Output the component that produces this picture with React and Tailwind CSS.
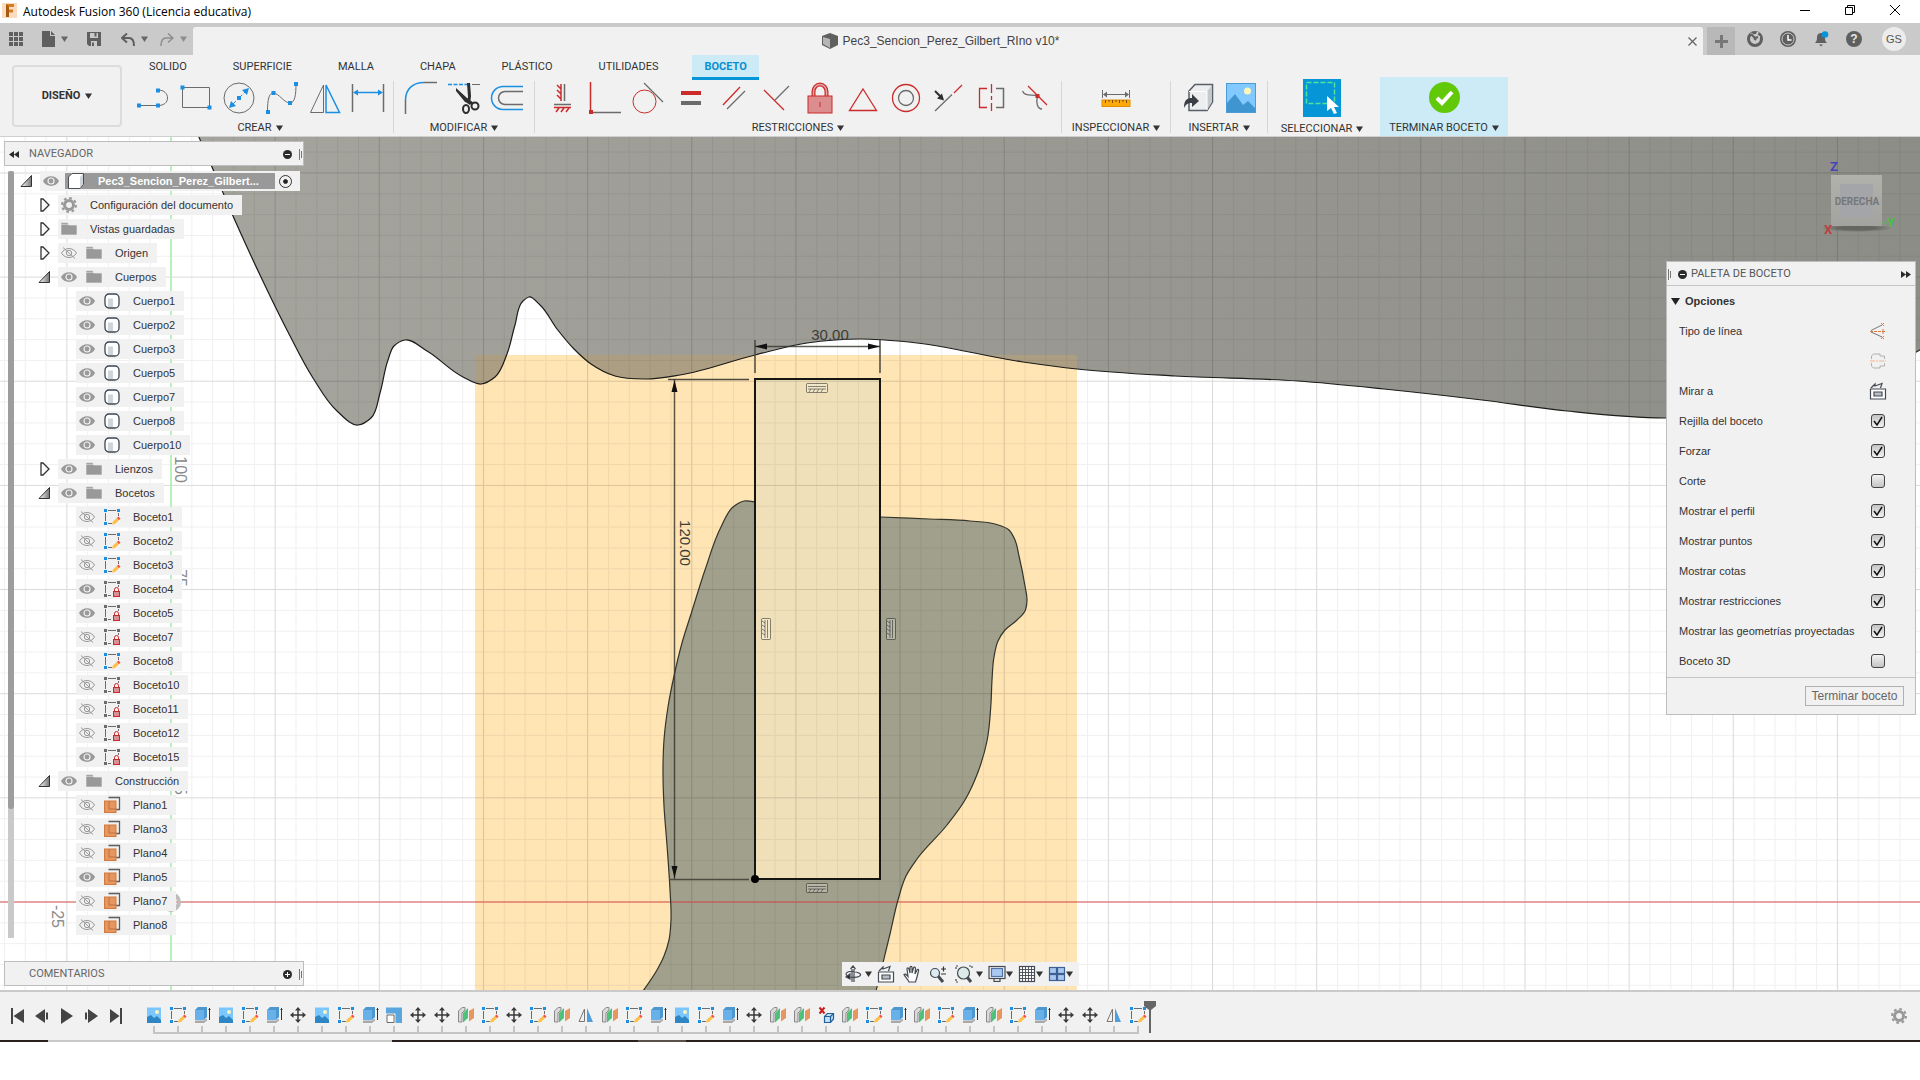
import { useState } from "react";
import clsx from "clsx";

const BLUE = "#1a8fe3";
const GREY = "#6b6b6b";
const RED = "#cc2b2b";

const TABS = ["SOLIDO", "SUPERFICIE", "MALLA", "CHAPA", "PLÁSTICO", "UTILIDADES", "BOCETO"];

const TREE = [
  { label: "Configuración del documento", level: 1, icon: "gear", open: false },
  { label: "Vistas guardadas", level: 1, icon: "folder", open: false },
  { label: "Origen", level: 1, icon: "folder", open: false, visible: false },
  { label: "Cuerpos", level: 1, icon: "folder", open: true, visible: true },
  { label: "Cuerpo1", level: 2, icon: "body", visible: true },
  { label: "Cuerpo2", level: 2, icon: "body", visible: true },
  { label: "Cuerpo3", level: 2, icon: "body", visible: true },
  { label: "Cuerpo5", level: 2, icon: "body", visible: true },
  { label: "Cuerpo7", level: 2, icon: "body", visible: true },
  { label: "Cuerpo8", level: 2, icon: "body", visible: true },
  { label: "Cuerpo10", level: 2, icon: "body", visible: true },
  { label: "Lienzos", level: 1, icon: "folder", open: false, visible: true },
  { label: "Bocetos", level: 1, icon: "folder", open: true, visible: true },
  { label: "Boceto1", level: 2, icon: "sketch", visible: false },
  { label: "Boceto2", level: 2, icon: "sketch", visible: false },
  { label: "Boceto3", level: 2, icon: "sketch", visible: false },
  { label: "Boceto4", level: 2, icon: "locked", visible: true },
  { label: "Boceto5", level: 2, icon: "locked", visible: true },
  { label: "Boceto7", level: 2, icon: "locked", visible: false },
  { label: "Boceto8", level: 2, icon: "sketch", visible: false },
  { label: "Boceto10", level: 2, icon: "locked", visible: false },
  { label: "Boceto11", level: 2, icon: "locked", visible: false },
  { label: "Boceto12", level: 2, icon: "locked", visible: false },
  { label: "Boceto15", level: 2, icon: "locked", visible: true },
  { label: "Construcción", level: 1, icon: "folder", open: true, visible: true },
  { label: "Plano1", level: 2, icon: "plane", visible: false },
  { label: "Plano3", level: 2, icon: "plane", visible: false },
  { label: "Plano4", level: 2, icon: "plane", visible: false },
  { label: "Plano5", level: 2, icon: "plane", visible: true },
  { label: "Plano7", level: 2, icon: "plane", visible: false },
  { label: "Plano8", level: 2, icon: "plane", visible: false },
];

const OPTIONS = [
  ["Rejilla del boceto", true],
  ["Forzar", true],
  ["Corte", false],
  ["Mostrar el perfil", true],
  ["Mostrar puntos", true],
  ["Mostrar cotas", true],
  ["Mostrar restricciones", true],
  ["Mostrar las geometrías proyectadas", true],
  ["Boceto 3D", false],
];

const TIMELINE = [
  "image", "sketch", "extrude", "image", "sketch", "extrude", "move",
  "image", "sketch", "extrude", "scale", "move", "move", "offset",
  "sketch", "move", "sketch", "offset", "mirror", "offset", "sketch",
  "extrude", "image", "sketch", "extrude", "move", "offset", "offset",
  "remove", "offset", "sketch", "extrude", "offset", "sketch", "extrude",
  "offset", "sketch", "extrude", "move", "move", "mirror", "sketch",
];

function Caret({ className = "" }) {
  return (
    <svg width="7" height="6" viewBox="0 0 7 6" className={className}>
      <path d="M0 0.500h7L3.500 6z" fill="currentColor" />
    </svg>
  );
}

/* ---------- ribbon icons, all on a 32px box ---------- */

function Dot({ x, y, color = BLUE }) {
  return <rect x={x - 2} y={y - 2} width="4" height="4" fill={color} />;
}

const RIBBON_ICONS = {
  line: (
    <>
      <path d="M1 23.500H21M21 8c6 0 9.500 3.500 9.500 8s-3.500 7.500-9.500 7.500" stroke={GREY} />
      <Dot x={2} y={23.5} />
      <Dot x={21} y={23.5} />
      <Dot x={21} y={8.5} />
    </>
  ),
  rect: (
    <>
      <path d="M2.500 5.500H29.500V25.500H2.500z" stroke={GREY} />
      <Dot x={2.5} y={5.5} />
      <Dot x={29.5} y={25.5} />
    </>
  ),
  circle: (
    <>
      <circle cx="16" cy="16" r="15" stroke={GREY} />
      <path d="M8 24L24 8" stroke={BLUE} strokeDasharray="7 2" />
      <path d="M6 26l2-7 5 5zM26 6l-2 7-5-5z" fill={BLUE} />
      <Dot x={16} y={16} />
    </>
  ),
  spline: (
    <>
      <path d="M1.500 29C1.500 18 3 11 7 11c6 0 11 10 17 10 5 0 6-9 6-19" stroke={GREY} />
      <Dot x={2} y={30} />
      <Dot x={7.5} y={11} />
      <Dot x={24} y={21} />
      <Dot x={30} y={2} />
    </>
  ),
  mirror: (
    <>
      <path d="M1.500 30.500L14.500 3V30.500z" stroke={GREY} />
      <path d="M17 30.500V3L30.500 30.500z" stroke={BLUE} strokeWidth="1.500" />
    </>
  ),
  dimension: (
    <>
      <path d="M0.500 2V30M31.500 2V30" stroke={GREY} strokeWidth="1.500" />
      <path d="M3 10.500H29" stroke={BLUE} strokeWidth="1.500" />
      <path d="M1 10.500l5-3v6zM31 10.500l-5-3v6z" fill={BLUE} />
    </>
  ),
  fillet: (
    <>
      <path d="M0.500 32V18M19 0.500H32" stroke={GREY} strokeWidth="1.500" />
      <path d="M0.500 18C0.500 7 8 0.500 19 0.500" stroke={BLUE} strokeWidth="1.500" />
    </>
  ),
  trim: (
    <>
      <path d="M0 2.500H21" stroke={BLUE} strokeWidth="1.500" strokeDasharray="4 1.500" />
      <path d="M24 2.500H32" stroke={GREY} />
      <path d="M19 1h3l1 13-1 9-3-2 1-6zM8 6l11 10 7 5-2 2-7-3L8 9z" fill="#2e2e2e" />
      <ellipse cx="18" cy="27" rx="3" ry="4" stroke="#2e2e2e" strokeWidth="2" />
      <ellipse cx="27" cy="24" rx="3.500" ry="3.500" stroke="#2e2e2e" strokeWidth="2" />
    </>
  ),
  offset: (
    <>
      <path d="M32 4.500H12a11.500 11.500 0 0 0 0 23H32" stroke={BLUE} strokeWidth="1.500" />
      <path d="M32 9.500H14a6.500 6.500 0 0 0 0 13H32" stroke={GREY} strokeWidth="1.500" />
    </>
  ),
  horizontal: (
    <>
      <path d="M15 2V19M8 25.500H25M11 3l4 4M11 8l4 4M11 13l4 4M13 26l-3 4M18 26l-3 4M23 26l-3 4" stroke={RED} strokeWidth="1.500" />
      <path d="M18.500 2V19M8 22.500H25" stroke={GREY} strokeWidth="1.500" />
    </>
  ),
  coincident: (
    <>
      <path d="M1.500 0V30" stroke={RED} strokeWidth="1.500" />
      <path d="M4 30.500H32" stroke={GREY} strokeWidth="1.500" />
      <Dot x={2} y={30} color={RED} />
    </>
  ),
  tangent: (
    <>
      <circle cx="12.500" cy="19.500" r="11.500" stroke={RED} />
      <path d="M12 1L31 20" stroke={GREY} strokeWidth="1.300" />
    </>
  ),
  equal: (
    <>
      <path d="M6 11H26" stroke={RED} strokeWidth="4" />
      <path d="M6 21H26" stroke={GREY} strokeWidth="4" />
    </>
  ),
  parallel: (
    <>
      <path d="M5 23L22 5" stroke={RED} strokeWidth="1.300" />
      <path d="M9 27L27 9" stroke={GREY} strokeWidth="1.300" />
    </>
  ),
  perpendicular: (
    <>
      <path d="M3 8L23 28" stroke={RED} strokeWidth="1.300" />
      <path d="M14 18L28 4" stroke={GREY} strokeWidth="1.300" />
    </>
  ),
  lock: (
    <>
      <path d="M9.500 14V9.500a6.500 7 0 0 1 13 0V14" stroke={RED} strokeWidth="4" />
      <path d="M9.500 14V9.500a6.500 7 0 0 1 13 0V14" stroke="#e5a3a3" strokeWidth="1.500" />
      <rect x="4" y="14" width="24" height="17" fill="#dc8d8d" stroke={RED} />
      <path d="M16 20v5" stroke={RED} />
    </>
  ),
  triangle: <path d="M16 7L29.500 28.500H2.500z" stroke={RED} strokeWidth="1.300" />,
  concentric: (
    <>
      <circle cx="16" cy="16" r="13.500" stroke={RED} strokeWidth="1.300" />
      <circle cx="16" cy="16" r="7.500" stroke={GREY} strokeWidth="1.300" />
    </>
  ),
  midpoint: (
    <>
      <path d="M2 29L19 12.500" stroke={GREY} strokeWidth="1.300" />
      <path d="M21 11L29 3" stroke={RED} strokeWidth="1.300" />
      <path d="M2 9l5 5" stroke="#2e2e2e" strokeWidth="2" />
      <path d="M11 18.500l-7-2 5-5z" fill="#2e2e2e" />
    </>
  ),
  symmetry: (
    <>
      <path d="M11 6.500H3.500V25.500H11M15.500 2V11M15.500 14v4M15.500 21v8" stroke={RED} strokeWidth="1.300" />
      <path d="M20 6.500H27.500V25.500H20" stroke={GREY} strokeWidth="1.500" />
    </>
  ),
  curvature: (
    <>
      <path d="M9 4L28 23" stroke={RED} strokeWidth="1.300" />
      <path d="M3.500 9C6 15 13 12 18.500 14 17 20 18 27 23 27" stroke={GREY} strokeWidth="1.300" />
      <Dot x={18.5} y={14} color={RED} />
    </>
  ),
  measure: (
    <>
      <path d="M2.500 8V16M29.500 8V16M4 12.500H28" stroke={GREY} />
      <path d="M3 12.500l4-3v6zM29 12.500l-4-3v6z" fill={GREY} />
      <rect x="2" y="18" width="28" height="6.500" fill="#ffa90a" stroke="#e08e00" />
      <path d="M5.500 18v3M9 18v2M12.500 18v3M16 18v2M19.500 18v3M23 18v2M26.500 18v3" stroke="#7a4d00" />
    </>
  ),
  insert: (
    <>
      <path d="M7 9L13 2.500H30.500V20L25 28.500H7z" fill="#eceef0" stroke="#585f66" strokeWidth="1.500" />
      <path d="M25 9.500L30 3V20L25 28z" fill="#c3c8ce" />
      <path d="M7 9.500H25V28" stroke="#fff" />
      <path d="M2 26c0-8 3-10 8-10v-4l7 7-7 6v-4c-4 0-6 1-8 5z" fill="#3a3f45" />
    </>
  ),
  picture: (
    <>
      <rect x="1.500" y="1.500" width="29" height="29" fill="#82c9ff" stroke="#4a9bd6" />
      <circle cx="22.500" cy="9" r="3.500" fill="#fdf6b8" />
      <path d="M2 21l8-9 8 11 5-4 7 7v4H2z" fill="#3f95cf" />
    </>
  ),
};

function RibbonIcon({ name }) {
  return (
    <svg width="32" height="32" viewBox="0 0 32 32" fill="none" className="overflow-visible">
      {RIBBON_ICONS[name]}
    </svg>
  );
}

/* ---------- 16px icons shared by the browser and the timeline ---------- */

const SMALL_ICONS = {
  gear: (
    <>
      <circle cx="8" cy="8" r="4.500" stroke="#999" strokeWidth="3" />
      <circle cx="8" cy="8" r="7" stroke="#999" strokeWidth="2" strokeDasharray="2.750 2.750" />
    </>
  ),
  folder: <path d="M0 1.500H6.500l1 1.500v1H16V14H0zM0 3.300H7" fill="#999" stroke="#f1f1f1" strokeWidth="0.600" />,
  body: (
    <>
      <rect x="1" y="1" width="14" height="14" rx="4" fill="#fff" stroke="#3d4650" strokeWidth="1.300" />
      <path d="M4 5.500H9V14H4z" fill="#cfd4da" />
    </>
  ),
  sketch: (
    <>
      <path d="M4 1.500H12M1.500 4V12M14.500 4V7M4 14.500H8" stroke={GREY} />
      <path d="M0 0h3v3H0zM13 0h3v3h-3zM0 13h3v3H0z" fill={BLUE} />
      <path d="M8 15.500l1-3 4.500-4 2 2-4.500 4.500z" fill="#ffbf47" />
      <path d="M13 9l1.500-1.500 2 2L15 11z" fill="#f05050" />
    </>
  ),
  locked: (
    <>
      <path d="M4 1.500H12M1.500 4V12M14.500 4V6M4 14.500H7" stroke={GREY} />
      <path d="M0 0h3v3H0zM13 0h3v3h-3zM0 13h3v3H0z" fill={GREY} />
      <path d="M10.500 10V8.500a2 2 0 0 1 4 0V10" stroke={RED} />
      <rect x="9.500" y="10.500" width="6" height="5" fill="#dc8d8d" stroke={RED} />
    </>
  ),
  plane: (
    <>
      <path d="M4.500 0.500H15.500V12.500H12" stroke="#5c5c5c" strokeWidth="1.300" />
      <rect x="0.500" y="4" width="11.500" height="11.500" fill="#e8965f" stroke="#cf7a40" />
      <path d="M5 4V12H12" stroke="#b87340" />
    </>
  ),
  image: (
    <>
      <rect x="1" y="0.500" width="14" height="15" fill="#7cc6ff" />
      <circle cx="11" cy="5" r="2" fill="#fdf6b8" />
      <path d="M1 10l4-2 3 3 3-2 4 4v3H1z" fill="#2f86c5" />
    </>
  ),
  extrude: (
    <>
      <path d="M1 13.500h9l3-2v2l-3 2.500H1z" fill="#a9a9a9" />
      <path d="M1 3l3-3h9v10l-3 3H1z" fill="#4d97d0" />
      <path d="M1 3h9v10H1z" fill="#67b0ea" />
      <path d="M15.500 1v12M14.500 2.500h2" stroke="#333" />
    </>
  ),
  scale: (
    <>
      <path d="M0 0.500H16V16H9.500V6.500H0z" fill="#5aa7e0" />
      <path d="M1 8H8V15.500H1z" fill="#fff" stroke={GREY} />
    </>
  ),
  move: (
    <>
      <path d="M8 2V14M2 8H14" stroke="#3b3b3b" strokeWidth="1.500" />
      <path d="M8 0l3 3.500H5zM8 16l3-3.500H5zM0 8l3.500-3v6zM16 8l-3.500-3v6z" fill="#3b3b3b" />
    </>
  ),
  offset: (
    <>
      <path d="M0.500 15V4L4 0.500H7V3L4 6V15z" fill="#d9d9d9" stroke="#8a8a8a" />
      <path d="M5 15.500V6l5-5V11z" fill="#4fc17a" />
      <path d="M11 14.500V4l5-3V11z" fill="#e8965f" />
    </>
  ),
  mirror: (
    <>
      <path d="M1 14.500L6.500 2V14.500z" stroke="#777" />
      <path d="M9 15V1l6 14z" fill="#4f9edb" />
    </>
  ),
  remove: (
    <>
      <path d="M1.500 0.500l5 6M6.500 0.500l-5 6" stroke="#c81e1e" strokeWidth="2" />
      <path d="M6.500 9.500l3-3H15.500V12l-3 3.500H6.500z" fill="#bfe0f7" stroke="#21609a" strokeWidth="1.200" />
      <path d="M6.500 9.500H12.500V15.500M12.500 9.500l3-3" stroke="#21609a" strokeWidth="1.200" />
    </>
  ),
};

function SmallIcon({ name }) {
  return (
    <svg width="16" height="16" viewBox="0 0 16 16" fill="none" className="shrink-0 overflow-visible">
      {SMALL_ICONS[name]}
    </svg>
  );
}

function Eye({ visible }) {
  if (visible) {
    return (
      <svg width="16" height="12" viewBox="0 0 16 12" fill="none">
        <path d="M0 6C3-0.500 13-0.500 16 6 13 12.500 3 12.500 0 6z" fill="#999" />
        <circle cx="8" cy="6" r="3" stroke="#f1f1f1" strokeWidth="1.200" />
      </svg>
    );
  }
  return (
    <svg width="16" height="12" viewBox="0 0 16 12" fill="none" stroke="#999">
      <path d="M0.500 6C4 0 12 0 15.500 6 12 12 4 12 0.500 6z" />
      <circle cx="8" cy="6" r="2.700" />
      <path d="M2 0.500L14 11.500" />
    </svg>
  );
}

function Expander({ open }) {
  return (
    <svg width="12" height="14" viewBox="0 0 12 14" fill="none" stroke="#333">
      <defs>
        <linearGradient id="fold">
          <stop offset="0" stopColor="#fff" />
          <stop offset="1" stopColor="#777" />
        </linearGradient>
      </defs>
      {open ? (
        <path d="M11.500 1.500V12.500H1z" fill="url(#fold)" />
      ) : (
        <path d="M3 1h2l6 6-6 6H3z" strokeWidth="1.300" />
      )}
    </svg>
  );
}

/* ---------- window chrome ---------- */

function TitleBar() {
  return (
    <header className="flex h-[23px] items-center bg-white pl-[2px] pr-5">
      <svg width="16" height="16" viewBox="0 0 16 16" className="mt-[-2px]">
        <rect width="15" height="15" fill="#fbdcc0" />
        <path d="M4 1H12V4H7V6.500H11V9.500H7V14H4z" fill="#d57a1f" />
        <path d="M4 1L7 4V14H4z" fill="#a85a10" />
      </svg>
      <h1 className="ml-[5px] font-['Open_Sans'] text-[12px] text-black">
        Autodesk Fusion 360 (Licencia educativa)
      </h1>
      <div className="ml-auto flex items-center gap-[35px] pb-1">
        <button aria-label="Minimizar">
          <svg width="10" height="10" viewBox="0 0 10 10" stroke="#000">
            <path d="M0 5.500H10" />
          </svg>
        </button>
        <button aria-label="Restaurar">
          <svg width="10" height="10" viewBox="0 0 10 10" fill="none" stroke="#000">
            <path d="M0.500 2.500H7.500V9.500H0.500zM2.500 2V0.500H9.500V7.500H8" />
          </svg>
        </button>
        <button aria-label="Cerrar">
          <svg width="10" height="10" viewBox="0 0 10 10" stroke="#000">
            <path d="M0 0L10 10M10 0L0 10" />
          </svg>
        </button>
      </div>
    </header>
  );
}

function TabBar() {
  return (
    <div className="flex h-8 items-end bg-[#cacaca] text-[#666]">
      <div className="flex w-[193px] items-center self-center pl-[9px]">
        <button aria-label="Panel de datos">
          <svg width="14" height="14" viewBox="0 0 14 14" fill="#5f5f5f">
            <path d="M0 0h4v4H0zM5 0h4v4H5zM10 0h4v4h-4zM0 5h4v4H0zM5 5h4v4H5zM10 5h4v4h-4zM0 10h4v4H0zM5 10h4v4H5zM10 10h4v4h-4z" />
          </svg>
        </button>
        <button aria-label="Archivo" className="ml-[19px] flex items-center gap-[6px]">
          <svg width="13" height="16" viewBox="0 0 13 16" fill="#5f5f5f">
            <path d="M0 0H8V5H13V16H0zM9 0l4 4H9z" />
          </svg>
          <Caret />
        </button>
        <button aria-label="Guardar" className="ml-[19px]">
          <svg width="14" height="14" viewBox="0 0 14 14">
            <path d="M0 0H14V14H2L0 12z" fill="#5f5f5f" />
            <path d="M3 1H11V6H3zM4 9H10V14H4z" fill="#cacaca" />
            <path d="M7.500 1H9.500V4.500H7.500zM5 10.500H7V14H5z" fill="#5f5f5f" />
          </svg>
        </button>
        <button aria-label="Deshacer" className="ml-5 flex items-center gap-[6px]">
          <svg width="14" height="13" viewBox="0 0 14 13" fill="none" stroke="#5f5f5f">
            <path d="M6 0.500L1 5l5 4.500" strokeWidth="2" />
            <path d="M1.500 5H8c4 0 5 3 5 8" strokeWidth="2" />
          </svg>
          <Caret />
        </button>
        <button aria-label="Rehacer" className="ml-[12px] flex items-center gap-[6px] text-[#8e8e8e]">
          <svg width="14" height="13" viewBox="0 0 14 13" fill="none" stroke="currentColor">
            <path d="M8 0.500L13 5 8 9.500M12.500 5H6C2 5 1 8 1 13" strokeWidth="1.500" />
          </svg>
          <Caret />
        </button>
      </div>
      <div className="flex h-7 flex-1 items-center rounded-t-[3px] bg-[#f1f1f1] pr-[6px]">
        <div className="flex flex-1 items-center justify-center gap-[5px] text-[12px] text-[#444]">
          <svg width="16" height="16" viewBox="0 0 16 16">
            <path d="M0 3L8 0l8 3v9l-8 4-8-4z" fill="#5f5f5f" />
            <path d="M1 4l7 2v9l-7-4z" fill="#b5b5b5" />
          </svg>
          Pec3_Sencion_Perez_Gilbert_RIno v10*
        </div>
        <button aria-label="Cerrar documento">
          <svg width="9" height="9" viewBox="0 0 9 9" stroke="#666" strokeWidth="1.300">
            <path d="M0.500 0.500L8.500 8.500M8.500 0.500L0.500 8.500" />
          </svg>
        </button>
      </div>
      <button aria-label="Nuevo documento" className="ml-1 flex h-7 w-7 items-center justify-center bg-[#b8b8b8]">
        <svg width="13" height="13" viewBox="0 0 13 13" stroke="#777" strokeWidth="3">
          <path d="M6.500 0V13M0 6.500H13" />
        </svg>
      </button>
      <div className="flex h-8 items-center gap-[17px] pl-3 pr-[14px]">
        <button aria-label="Extensiones">
          <svg width="16" height="16" viewBox="0 0 16 16" fill="none">
            <circle cx="8" cy="8" r="6.500" stroke="#5f5f5f" strokeWidth="3" />
            <path d="M4 2l4 5M11 1L9 5l4 1" stroke="#cacaca" strokeWidth="2" />
            <path d="M4 3l4 4 3-1M7 7l2 2" stroke="#5f5f5f" strokeWidth="2" />
          </svg>
        </button>
        <button aria-label="Estado del trabajo">
          <svg width="16" height="16" viewBox="0 0 16 16" fill="none">
            <circle cx="8" cy="8" r="8" fill="#5f5f5f" />
            <circle cx="8" cy="8" r="6" stroke="#cacaca" />
            <path d="M8 4V9H11.500" stroke="#fff" strokeWidth="1.500" />
          </svg>
        </button>
        <button aria-label="Notificaciones">
          <svg width="16" height="16" viewBox="0 0 16 16">
            <path d="M2 12c2-2 2-4 2-6 0-3 2-4 4-4s4 1 4 4 0 4 2 6zM6 13.500h4l-2 2z" fill="#5f5f5f" />
            <circle cx="12" cy="3.500" r="3.300" fill="#0696d7" />
          </svg>
        </button>
        <button aria-label="Ayuda" className="flex size-4 items-center justify-center rounded-full bg-[#5f5f5f] text-[12px] font-bold leading-4 text-[#e6e6e6]">
          ?
        </button>
        <button className="ml-[3px] flex size-6 items-center justify-center rounded-full bg-[#ececec] text-[11px] text-[#555]">
          GS
        </button>
      </div>
    </div>
  );
}

function ToolGroup({ label, icons, width }) {
  return (
    <section className={clsx("flex flex-col items-center pt-[2px]", width)}>
      <div className="flex h-[38px] items-center">
        {icons.map((name) => (
          <button key={name} aria-label={name} className="flex w-[43px] justify-center">
            <RibbonIcon name={name} />
          </button>
        ))}
      </div>
      <button className="mt-1 flex items-center gap-1 leading-4">
        {label} <Caret />
      </button>
    </section>
  );
}

function Divider() {
  return <span className="mt-1 h-[52px] w-px bg-[#d6d6d6]" />;
}

function Ribbon() {
  const [tab, setTab] = useState("BOCETO");

  return (
    <div className="flex h-[82px] border-b border-[#cfcfcf] bg-[#f1f1f1] font-[Roboto] text-[11px] text-[#333]">
      <button className="ml-3 mt-[10px] flex h-[62px] w-[110px] items-center justify-center gap-[5px] rounded-[4px] border-2 border-[#dcdcdc] font-bold">
        DISEÑO <Caret />
      </button>
      <div className="ml-[9px] flex-1">
        <nav className="flex h-[22px] items-start gap-[22px] pl-[6px]">
          {TABS.map((name) => (
            <button
              key={name}
              onClick={() => setTab(name)}
              className={clsx(
                "h-[25px] border-b-[3px] px-3 pt-[2px]",
                tab === name
                  ? "border-[#0696d7] bg-[#cdeaf7] font-bold text-[#0a8fd0]"
                  : "border-transparent"
              )}
            >
              {name}
            </button>
          ))}
        </nav>
        <div className="flex h-[59px]">
          <ToolGroup label="CREAR" width="w-[258px] mr-1" icons={["line", "rect", "circle", "spline", "mirror", "dimension"]} />
          <Divider />
          <ToolGroup label="MODIFICAR" width="w-[140px]" icons={["fillet", "trim", "offset"]} />
          <Divider />
          <ToolGroup
            label="RESTRICCIONES"
            width="w-[526px]"
            icons={[
              "horizontal", "coincident", "tangent", "equal", "parallel", "perpendicular",
              "lock", "triangle", "concentric", "midpoint", "symmetry", "curvature",
            ]}
          />
          <Divider />
          <ToolGroup label="INSPECCIONAR" width="w-[108px]" icons={["measure"]} />
          <Divider />
          <ToolGroup label="INSERTAR" width="w-[96px]" icons={["insert", "picture"]} />
          <Divider />
          <section className="mr-1 flex w-[108px] flex-col items-center pt-[2px]">
            <button aria-label="Seleccionar" className="size-[38px] bg-[#0696d7]">
              <svg width="38" height="38" viewBox="0 0 38 38" fill="none">
                <rect x="3.500" y="3.500" width="28" height="21" stroke="#4fe39b" strokeWidth="1.500" strokeDasharray="5 2" />
                <path d="M24 17v15l4-3 3 6 3-1-3-6h5z" fill="#fff" />
              </svg>
            </button>
            <button className="mt-1 flex items-center gap-1 leading-4">
              SELECCIONAR <Caret />
            </button>
          </section>
          <section className="flex w-[128px] flex-col items-center bg-[#cdeaf7] pt-[2px]">
            <button aria-label="Terminar boceto" className="flex h-[38px] items-center">
              <svg width="31" height="31" viewBox="0 0 31 31" fill="none">
                <circle cx="15.500" cy="15.500" r="15.500" fill="#62c90a" />
                <path d="M8 16l5 5 10-11" stroke="#fff" strokeWidth="4" />
              </svg>
            </button>
            <button className="mt-1 flex items-center gap-1 leading-4">
              TERMINAR BOCETO <Caret />
            </button>
          </section>
        </div>
      </div>
    </div>
  );
}

/* ---------- canvas ---------- */

const dist = (a, b) => Math.hypot(b[0] - a[0], b[1] - a[1]) || 1;

// Slope at b, weighted by the lengths of the two chords that meet there
function tangent(a, b, c) {
  const ab = dist(a, b);
  const bc = dist(b, c);
  return [0, 1].map((k) => (((b[k] - a[k]) / ab) * bc + ((c[k] - b[k]) / bc) * ab) / (ab + bc));
}

// Smooth curve through the points, written as cubic segments
function spline(points) {
  const last = points.length - 1;
  const slopes = points.map((p, i) => tangent(points[Math.max(i - 1, 0)], p, points[Math.min(i + 1, last)]));
  return points
    .slice(1)
    .map((p, i) => {
      const b = points[i];
      const len = dist(b, p) / 3;
      const c1 = [b[0] + slopes[i][0] * len, b[1] + slopes[i][1] * len];
      const c2 = [p[0] - slopes[i + 1][0] * len, p[1] - slopes[i + 1][1] * len];
      return `C${c1} ${c2} ${p}`;
    })
    .join("");
}

const UPPER_EDGE = [
  [198, 135], [212, 167], [233, 216], [260, 275], [288, 332], [313, 378], [337, 411], [358, 425],
  [371, 418], [380, 393], [388, 360], [394, 346], [405, 340], [427, 351], [463, 377],
  [481, 384], [495, 377], [507, 354], [515, 325], [523, 301], [529, 297], [540, 305], [557, 329],
  [574, 349], [591, 364], [615, 376], [646, 379], [680, 375], [755, 355], [807, 343], [835, 340],
  [860, 339], [909, 342], [1023, 362], [1077, 369], [1175, 376], [1298, 381],
  [1384, 389], [1482, 400], [1567, 411], [1665, 418], [1780, 408], [1880, 372], [1925, 347],
];
const LOWER_LEFT = [
  [755, 502], [744, 501], [733, 507], [721, 527], [705, 570], [692, 611], [682, 643], [674, 676],
  [668, 707], [664, 740], [663, 773], [664, 806], [667, 845], [670, 890], [671, 920],
  [669, 940], [664, 956], [657, 970], [643, 991],
];
const LOWER_RIGHT = [
  [876, 991], [890, 934], [898, 900], [906, 876], [917, 859], [947, 825],
  [965, 800], [978, 772], [987, 741], [991, 703], [992, 680], [994, 657], [998, 641], [1005, 630],
  [1017, 620], [1025, 611], [1027, 600], [1025, 586], [1019, 556], [1015, 540], [1009, 530],
  [995, 524], [970, 521], [929, 519], [880, 517],
];

const upperEdge = `M${UPPER_EDGE[0]}${spline(UPPER_EDGE)}`;
const upperBody = `${upperEdge}V130H198z`;
const leftEdge = `M${LOWER_LEFT[0]}${spline(LOWER_LEFT)}`;
const rightEdge = `M${LOWER_RIGHT[0]}${spline(LOWER_RIGHT)}`;
const lowerBody = `${leftEdge}L${LOWER_RIGHT[0]}${spline(LOWER_RIGHT)}z`;

function ConstraintGlyph({ x, y, vertical }) {
  return (
    <g transform={`translate(${x} ${y})${vertical ? " rotate(90)" : ""}`} fill="none" stroke="#000" strokeOpacity="0.450">
      <rect x="-10.500" y="-4.500" width="21" height="9" rx="1" fill="#fff" fillOpacity="0.250" />
      <path d="M-9 -1.500H9M-9 1H9M-8 4l2-3M-4 4l2-3M0 4l2-3M4 4l2-3" />
    </g>
  );
}

function Viewport() {
  return (
    <svg
      viewBox="0 137 1920 853"
      preserveAspectRatio="xMidYMid slice"
      className="absolute inset-0 h-full w-full"
      fill="none"
    >
      <defs>
        <linearGradient id="steel">
          <stop offset="0" stopColor="#a5a49d" />
          <stop offset="1" stopColor="#8d8d87" />
        </linearGradient>
        <pattern id="minor" x="170.500" y="901.500" width="20.830" height="20.830" patternUnits="userSpaceOnUse">
          <path d="M0.500 0V21M0 0.500H21" stroke="#000" strokeOpacity="0.060" />
        </pattern>
        <pattern id="major" x="170.500" y="901.500" width="104.150" height="104.150" patternUnits="userSpaceOnUse">
          <path d="M0.500 0V105M0 0.500H105" stroke="#000" strokeOpacity="0.090" />
        </pattern>
        <clipPath id="upper">
          <path d={upperBody} />
        </clipPath>
      </defs>

      <rect x="475" y="355" width="602" height="640" fill="#ffe4b4" />
      <path d={upperBody} fill="url(#steel)" />
      <rect x="475" y="355" width="602" height="100" fill="#ac9e82" clipPath="url(#upper)" />
      <path d={lowerBody} fill="#a1a08c" />
      <rect x="755" y="379" width="125" height="500" fill="#efe0b9" />

      <rect y="137" width="1920" height="853" fill="url(#minor)" />
      <rect y="137" width="1920" height="853" fill="url(#major)" />
      <path d="M171 137V990" stroke="#b9efb9" strokeWidth="2" />
      <path d="M0 902H1920" stroke="#e04848" strokeOpacity="0.450" strokeWidth="2" />
      <circle cx="171" cy="902" r="8" stroke="#bdbdbd" strokeWidth="4" />

      <path d={upperEdge} stroke="#1c1c1a" strokeWidth="1.200" />
      <path d={leftEdge} stroke="#33352c" strokeWidth="1.200" />
      <path d={rightEdge} stroke="#33352c" strokeWidth="1.200" />

      <path d="M755 340V373M880 340V373M668 379.500H749M669 879.500H749" stroke="#4d4a40" strokeWidth="1.500" />
      <path d="M755 346.500H880M674.500 379V879" stroke="#33322c" strokeOpacity="0.800" strokeWidth="1.500" />
      <path
        d="M755 346.500l12-3v6zM880 346.500l-12-3v6zM674.500 380l-3 12h6zM674.500 878l-3-12h6z"
        fill="#111"
      />
      <rect x="755" y="379" width="125" height="500" stroke="#151512" strokeWidth="2" />
      <circle cx="755" cy="879" r="4" fill="#000" />

      <ConstraintGlyph x={817} y={388} />
      <ConstraintGlyph x={817} y={888} />
      <ConstraintGlyph x={766} y={629} vertical />
      <ConstraintGlyph x={891} y={629} vertical />

      <g fill="#3d3c36" fontSize="15" textAnchor="middle">
        <text x="830" y="340">30.00</text>
        <text transform="translate(680 543) rotate(90)">120.00</text>
      </g>
      <g fill="#8b8b8b" fontSize="16" textAnchor="end">
        <text transform="translate(175 483) rotate(90)">100</text>
        <text transform="translate(175 587) rotate(90)">75</text>
        <text transform="translate(175 795) rotate(90)">25</text>
        <text transform="translate(52 928) rotate(90)">-25</text>
      </g>
    </svg>
  );
}

/* ---------- browser ---------- */

function Grip() {
  return (
    <svg width="3" height="11" viewBox="0 0 3 11" stroke="#777">
      <path d="M0.500 0V11M2.500 2V9" />
    </svg>
  );
}

function RoundSign({ plus }) {
  return (
    <svg width="9" height="9" viewBox="0 0 9 9" stroke="#fff" className="overflow-visible">
      <circle cx="4.500" cy="4.500" r="4.500" fill="#2b2b2b" stroke="none" />
      <path d={plus ? "M2 4.500H7M4.500 2V7" : "M2 4.500H7"} />
    </svg>
  );
}

function PanelBar({ title, plus }) {
  return (
    <div className="flex h-[25px] items-center border border-[#bdbdbd] bg-[#f1f1f1] pl-1 pr-px pt-px font-[Roboto] text-[11px] text-[#666]">
      <span className="flex w-5">
        {!plus && (
          <svg width="10" height="7" viewBox="0 0 10 7" fill="#2b2b2b">
            <path d="M5 0V7L0 3.500zM10 0V7L5 3.500z" />
          </svg>
        )}
      </span>
      <h2>{title}</h2>
      <button aria-label={title} className="ml-auto mr-[7px]">
        <RoundSign plus={plus} />
      </button>
      <Grip />
    </div>
  );
}

function TreeRow({ item }) {
  const nested = item.level === 2;
  return (
    <li className={clsx("flex h-5 items-center", nested ? "pl-[62px]" : "pl-6")}>
      {!nested && (
        <button aria-label={`Desplegar ${item.label}`} className="mr-2">
          <Expander open={item.open} />
        </button>
      )}
      <div className="flex h-5 items-center bg-[#f1f1f1] pl-[3px] pr-[9px]">
        {item.visible !== undefined && (
          <button aria-label={`Visibilidad de ${item.label}`} className="mr-[9px]">
            <Eye visible={item.visible} />
          </button>
        )}
        <SmallIcon name={item.icon} />
        <span className="ml-[13px] whitespace-nowrap">{item.label}</span>
      </div>
    </li>
  );
}

function Browser() {
  return (
    <aside className="flex w-[304px] flex-col py-1 pl-1">
      <PanelBar title="NAVEGADOR" />
      <div className="mt-[5px] flex pl-1 text-[11px] text-[#333]">
        <div className="w-[6px] bg-[#c9c9c9] pb-[129px]">
          <div className="h-full rounded-full bg-[#9d9d9d]" />
        </div>
        <ul className="flex flex-col gap-1 pb-[3px]">
          <li className="flex h-5 items-center pl-[6px]">
            <button aria-label="Desplegar componente" className="mr-2">
              <Expander open />
            </button>
            <div className="flex h-5 w-[260px] items-center bg-[#f1f1f1] pl-[3px]">
              <Eye visible />
              <div className="ml-[6px] flex h-4 w-[210px] items-center bg-[#999] pl-[3px] font-bold text-white">
                <svg width="16" height="16" viewBox="0 0 16 16" stroke="#4a4f55">
                  <path d="M0.500 4L4 0.500H15.500V11L12 15.500H0.500z" fill="#fff" />
                  <path d="M12 4l3-3v10l-3 4z" fill="#cfd4da" stroke="none" />
                </svg>
                <span className="ml-[14px]">Pec3_Sencion_Perez_Gilbert...</span>
              </div>
              <button aria-label="Activar componente" className="ml-1">
                <svg width="13" height="13" viewBox="0 0 13 13" fill="none" stroke="#333">
                  <circle cx="6.500" cy="6.500" r="6" />
                  <circle cx="6.500" cy="6.500" r="2" fill="#222" />
                </svg>
              </button>
            </div>
          </li>
          {TREE.map((item) => (
            <TreeRow key={item.label} item={item} />
          ))}
        </ul>
      </div>
      <div className="mt-auto">
        <PanelBar title="COMENTARIOS" plus />
      </div>
    </aside>
  );
}

/* ---------- navigation bar ---------- */

function NavIcon({ children }) {
  return (
    <svg width="18" height="18" viewBox="0 0 18 18" fill="none" stroke="#444a52" strokeWidth="1.200">
      {children}
    </svg>
  );
}

function LookAtIcon() {
  return (
    <NavIcon>
      <path d="M1.500 7H16.500V17H1.500z" fill="#fff" />
      <path d="M5 10H13V14H5z" fill="#b9bec6" />
      <path d="M2 6l4-4v2l7-2.500L11.500 6" />
    </NavIcon>
  );
}

function NavBar() {
  return (
    <div className="mb-1 flex h-6 w-[237px] items-center self-end bg-[#f1f1f1] pl-[2px] text-[#333]">
      <button aria-label="Orbitar" className="flex items-center gap-[3px]">
        <NavIcon>
          <path d="M8 4V17M10 4V17M6.500 4L9 1l2.500 3M5 12C-1 9 3 6 9 6.500s10 3 6 5c-2 1-6 1-10 0.500" />
          <path d="M2 12l4-3v5z" fill="#222" />
        </NavIcon>
        <Caret />
      </button>
      <button aria-label="Mirar a" className="ml-[5px]">
        <LookAtIcon />
      </button>
      <button aria-label="Encuadre" className="ml-2">
        <NavIcon>
          <path
            d="M6 17C5 14 2 12 1 9.500c1-1 2.500 0 4 2L4 4c0-1.500 1.500-1.500 2 0l1 4V2.500c0-1.500 2-1.500 2 0V8l1.500-5c0.500-1.500 2-1 2 0.500L12 9l2-4c1-1.200 2-0.500 1.500 1L14 12c-0.500 2-1 3-1.500 5z"
            fill="#fff"
          />
        </NavIcon>
      </button>
      <button aria-label="Zoom" className="ml-2">
        <NavIcon>
          <path d="M9 11l5 6" strokeWidth="3" />
          <circle cx="6" cy="8" r="4.500" fill="#dcebf0" />
          <path d="M12 4H17M14.500 1.500V6.500M12 9H17" stroke="#333" />
        </NavIcon>
      </button>
      <button aria-label="Ajustar" className="ml-2 flex items-center gap-[3px]">
        <NavIcon>
          <path d="M1 4V1H4M14 1h3v3M1 14v3h3" strokeDasharray="2 1" />
          <path d="M12 12l4 5" strokeWidth="3" />
          <circle cx="8.500" cy="8" r="6" fill="#dcebe8" />
        </NavIcon>
        <Caret />
      </button>
      <button aria-label="Configuración de visualización" className="ml-[5px] flex items-center">
        <NavIcon>
          <rect x="1" y="1.500" width="16" height="12" />
          <rect x="3.500" y="3.500" width="11" height="8" fill="#a9c8f0" stroke="#5074a8" />
          <path d="M6 14v2.500h6V14" fill="#ddd" />
        </NavIcon>
        <Caret />
      </button>
      <button aria-label="Rejilla" className="ml-[5px] flex items-center">
        <NavIcon>
          <rect x="1.500" y="1.500" width="15" height="15" fill="#fff" />
          <path d="M4.500 1V17M7.500 1V17M10.500 1V17M13.500 1V17M1 4.500H17M1 7.500H17M1 10.500H17M1 13.500H17" strokeWidth="0.900" />
        </NavIcon>
        <Caret />
      </button>
      <button aria-label="Ventanas" className="ml-[5px] flex items-center">
        <NavIcon>
          <g fill="#a9c8f0" stroke="#3d5f92">
            <rect x="1.500" y="2.500" width="7" height="6" />
            <rect x="9.500" y="2.500" width="7" height="6" />
            <rect x="1.500" y="9.500" width="7" height="6" />
            <rect x="9.500" y="9.500" width="7" height="6" />
          </g>
        </NavIcon>
        <Caret />
      </button>
    </div>
  );
}

/* ---------- view cube and sketch palette ---------- */

function ViewCube() {
  return (
    <svg width="80" height="90" viewBox="0 0 80 90" className="mr-5">
      <defs>
        <linearGradient id="cube" x2="0" y2="1">
          <stop offset="0" stopColor="#b2b2ad" />
          <stop offset="1" stopColor="#a2a29e" />
        </linearGradient>
        <radialGradient id="shade">
          <stop offset="0.500" stopColor="#666661" />
          <stop offset="1" stopColor="#666661" stopOpacity="0" />
        </radialGradient>
      </defs>
      <ellipse cx="37" cy="73" rx="36" ry="4" fill="url(#shade)" />
      <rect x="11" y="20" width="51" height="51" fill="url(#cube)" />
      <rect x="20" y="29" width="33" height="33" fill="#a3a5a8" />
      <g fontFamily="Roboto" fontWeight="bold">
        <text x="37" y="50" textAnchor="middle" fontSize="10" fill="#747879">DERECHA</text>
        <text x="10" y="16" fontSize="13" fill="#4646b8">Z</text>
        <text x="4" y="79" fontSize="13" fill="#c04040">X</text>
        <text x="62" y="72" fontSize="13" fill="#45c045">-Y</text>
      </g>
    </svg>
  );
}

function OptionRow({ label, defaultChecked }) {
  return (
    <label className="flex h-[30px] items-center justify-between pl-3 pr-[30px]">
      {label}
      <span className="grid">
        <input
          type="checkbox"
          defaultChecked={defaultChecked}
          className="peer size-[14px] appearance-none rounded-[3px] border border-[#444] bg-linear-to-b from-[#f2f2f2] to-[#c4c4c4] [grid-area:1/1] checked:from-[#c4c4c4] checked:to-[#f2f2f2]"
        />
        <svg
          width="14"
          height="14"
          viewBox="0 0 14 14"
          fill="none"
          className="pointer-events-none invisible [grid-area:1/1] peer-checked:visible"
        >
          <path d="M3 7l3 4 5-8" stroke="#111" strokeWidth="1.500" />
        </svg>
      </span>
    </label>
  );
}

function SketchPalette() {
  return (
    <aside className="mr-1 mt-4 w-[250px] border border-[#bdbdbd] bg-[#f1f1f1] text-[11px] text-[#333]">
      <div className="flex h-6 items-center border-b border-[#c4c4c4] pl-px pr-1 pt-px font-[Roboto] text-[#555]">
        <Grip />
        <button aria-label="Contraer paleta" className="ml-[7px] mr-1">
          <RoundSign />
        </button>
        <h2>PALETA DE BOCETO</h2>
        <svg width="10" height="7" viewBox="0 0 10 7" fill="#2b2b2b" className="ml-auto">
          <path d="M0 0V7L5 3.500zM5 0V7L10 3.500z" />
        </svg>
      </div>
      <button className="flex h-[30px] items-center gap-[5px] pl-1 font-bold">
        <svg width="9" height="7" viewBox="0 0 9 7">
          <path d="M0 0H9L4.500 7z" fill="#222" />
        </svg>
        Opciones
      </button>
      <div className="flex h-[30px] items-center justify-between pl-3 pr-[29px]">
        Tipo de línea
        <button aria-label="Construcción">
          <svg width="16" height="16" viewBox="0 0 16 16" fill="none">
            <path d="M1 7.500L12 2M1 9l11 5" stroke="#777" />
            <path d="M0 8.500H16" stroke="#e07b39" strokeDasharray="3 1" />
            <path d="M11 0l3 3M14 0l-3 3M11 13l3 3M14 13l-3 3M13 6v5" stroke="#e07b39" />
          </svg>
        </button>
      </div>
      <div className="flex h-[30px] items-center justify-end pr-[29px]">
        <button aria-label="Línea de eje">
          <svg width="16" height="16" viewBox="0 0 16 16" fill="none">
            <path d="M1.500 6V3l2-2H10v2h4.500v3M1.500 10v3l2 2H10v-2h4.500v-3" stroke="#b0b0b0" />
            <path d="M0 8H16" stroke="#f0b48c" strokeDasharray="5 1 2 1" />
          </svg>
        </button>
      </div>
      <div className="flex h-[30px] items-center justify-between pl-3 pr-7">
        Mirar a
        <button aria-label="Mirar a">
          <LookAtIcon />
        </button>
      </div>
      {OPTIONS.map(([label, checked]) => (
        <OptionRow key={label} label={label} defaultChecked={checked} />
      ))}
      <div className="mt-px flex h-[37px] items-center justify-end border-t border-[#c4c4c4] pr-[11px]">
        <button className="h-5 w-[99px] border border-[#b0b0b0] text-[12px] text-[#666]">
          Terminar boceto
        </button>
      </div>
    </aside>
  );
}

/* ---------- timeline ---------- */

const PLAYBACK = [
  ["Inicio", "M3 0h2v16H3zM16 1V15L5.500 8z"],
  ["Paso atrás", "M12 1V15L2 8zM13 4.500h2v7h-2z"],
  ["Reproducir", "M3 0L15 8 3 16z"],
  ["Paso adelante", "M5 1V15L15 8zM2 4.500h2v7H2z"],
  ["Final", "M2 1V15L11.500 8zM12 0h2v16h-2z"],
];

function Timeline() {
  return (
    <footer className="flex h-[50px] items-start border-t-2 border-[#cacaca] bg-[#f1f1f1]">
      <div className="flex gap-[9px] pl-2 pt-4">
        {PLAYBACK.map(([label, d]) => (
          <button key={label} aria-label={label}>
            <svg width="16" height="16" viewBox="0 0 16 16" fill="#444">
              <path d={d} />
            </svg>
          </button>
        ))}
      </div>
      <ol className="ml-[18px] flex pt-[15px]">
        {TIMELINE.map((name, i) => (
          <li key={i} className="flex w-6 flex-col items-center">
            <SmallIcon name={name} />
            <span className="mt-[3px] h-[6px] w-[2px] bg-[#c4c4c4]" />
            <span
              className={clsx(
                "h-[2px] bg-[#c4c4c4]",
                i === 0 && "w-[13px] self-end",
                i === TIMELINE.length - 1 && "w-[13px] self-start",
                i > 0 && i < TIMELINE.length - 1 && "w-full"
              )}
            />
          </li>
        ))}
      </ol>
      <svg width="12" height="32" viewBox="0 0 12 32" fill="#666" className="-ml-[6px] mt-[9px]">
        <path d="M0 0H12V5L7 9V32H5V9L0 5z" />
      </svg>
      <button aria-label="Configuración" className="ml-auto mr-[13px] mt-4">
        <SmallIcon name="gear" />
      </button>
    </footer>
  );
}

function App() {
  return (
    <div className="flex min-h-screen flex-col bg-white font-['Liberation_Sans',Arial,sans-serif]">
      <TitleBar />
      <TabBar />
      <Ribbon />
      <main className="relative grid flex-1 grid-cols-[1fr_auto_1fr] overflow-hidden">
        <Viewport />
        <div className="relative flex">
          <Browser />
        </div>
        <div className="relative flex">
          <NavBar />
        </div>
        <div className="relative flex flex-col items-end pt-[18px]">
          <ViewCube />
          <SketchPalette />
        </div>
      </main>
      <Timeline />
      <div className="flex h-[2px] bg-[#2a211f]">
        <span className="ml-12 w-[344px] bg-[#c9c9c9]" />
        <span className="ml-[246px] w-12 bg-[#5c524b]" />
      </div>
      <div className="h-[38px]" />
    </div>
  );
}

export default App;
